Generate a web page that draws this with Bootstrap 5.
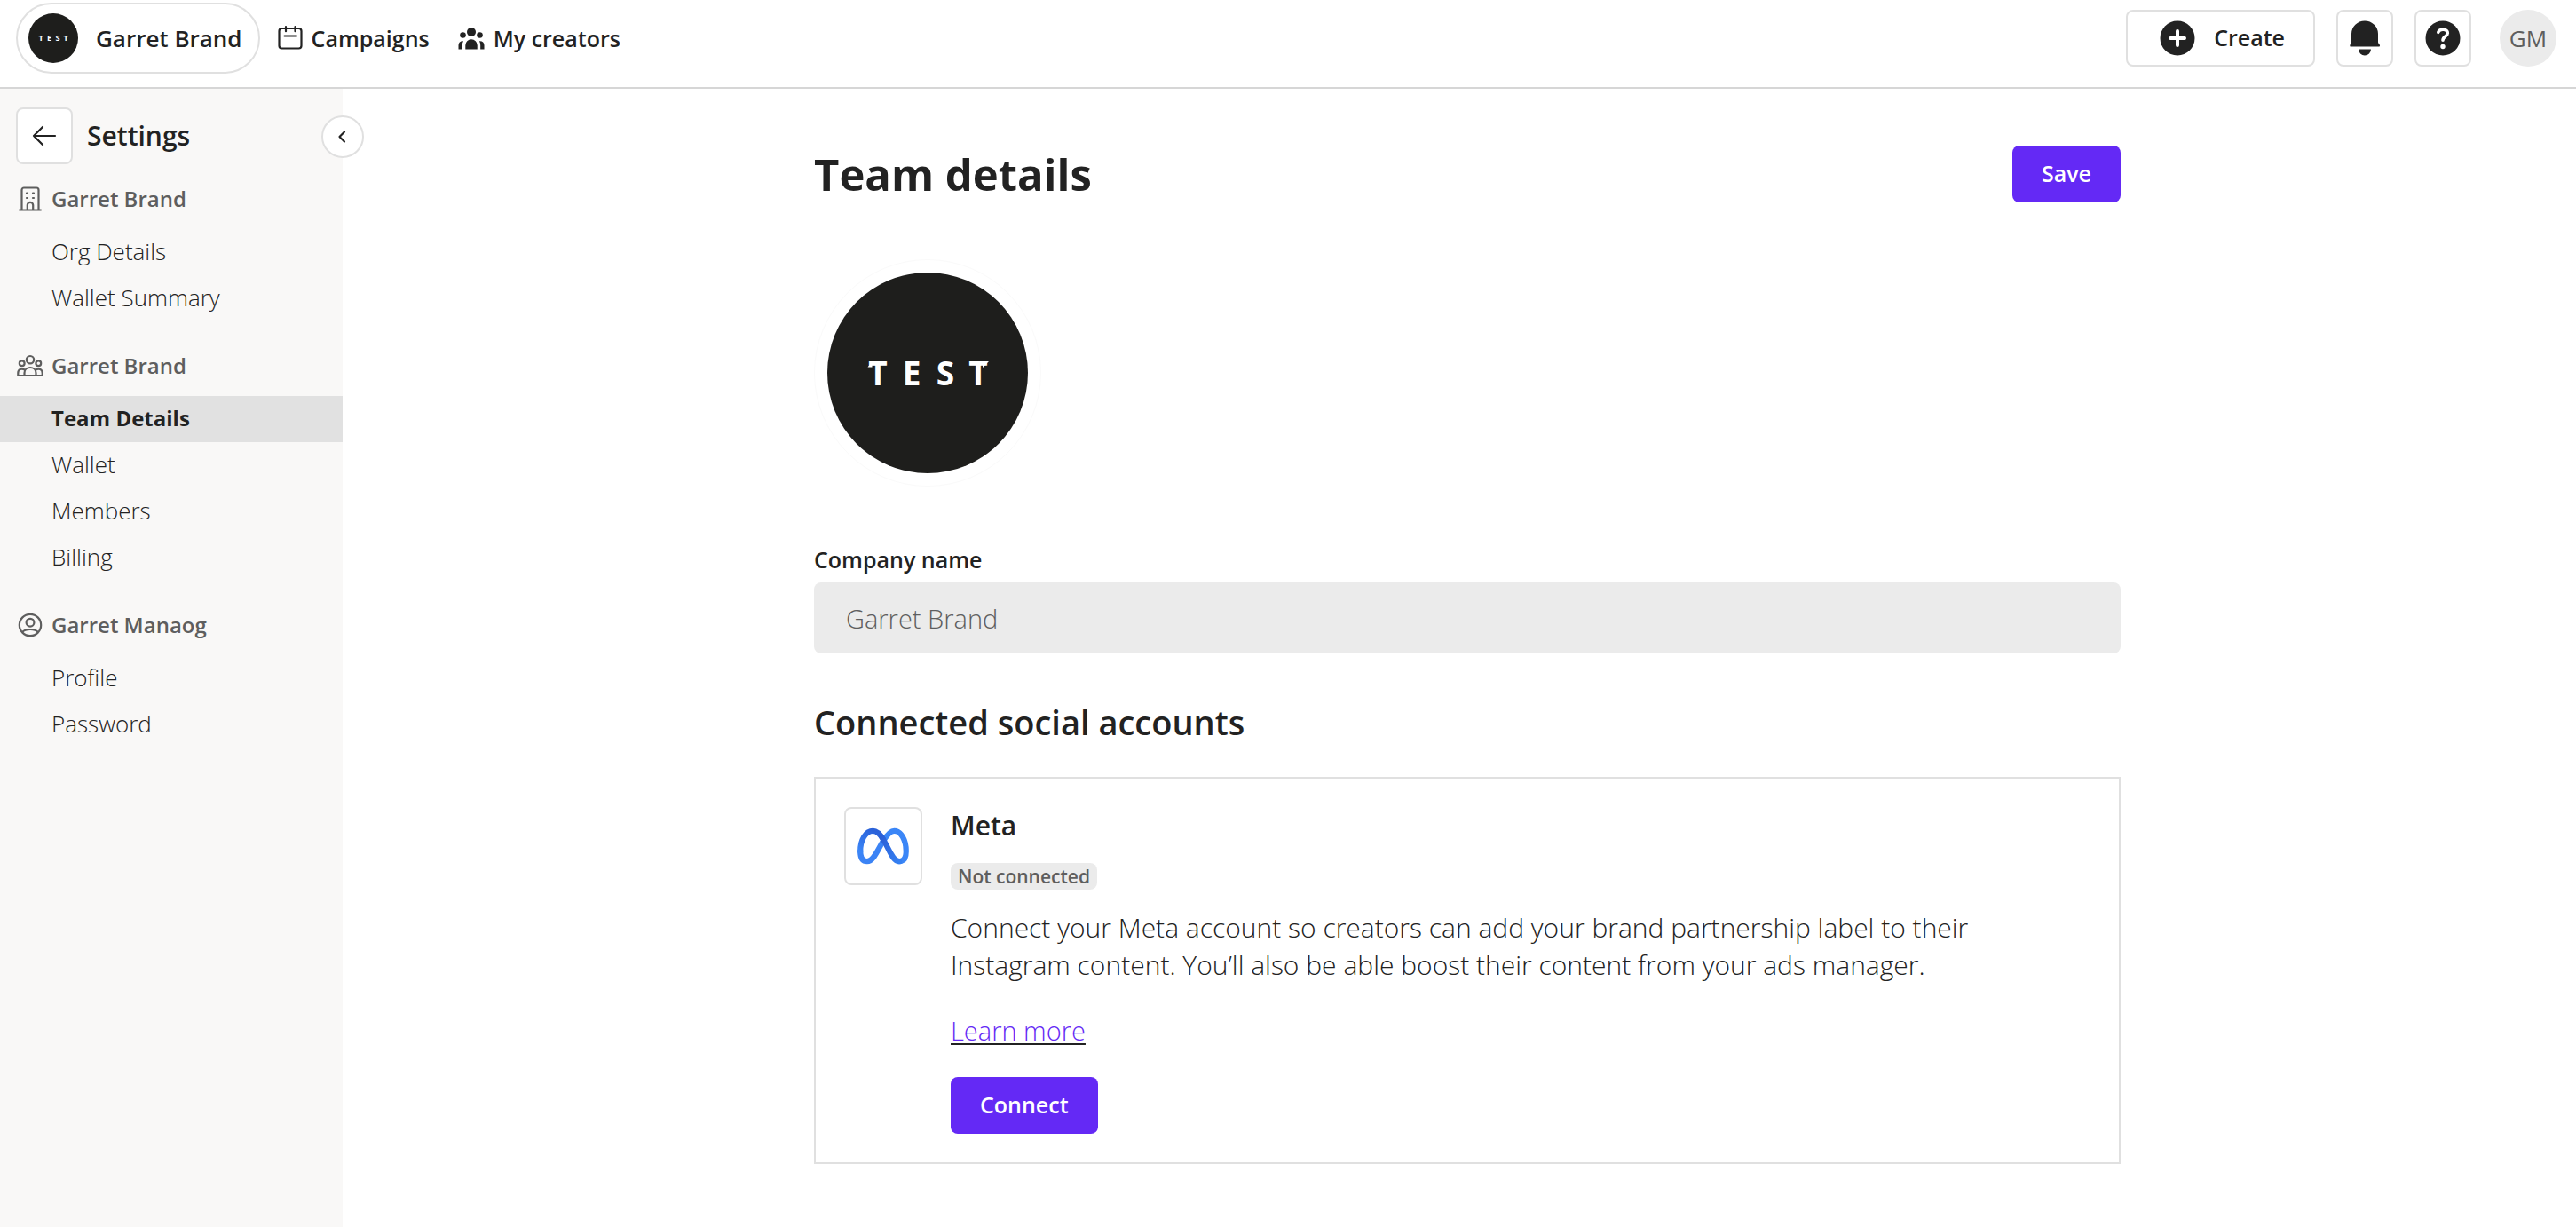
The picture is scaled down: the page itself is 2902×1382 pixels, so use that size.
<!DOCTYPE html>
<html lang="en">
<head>
<meta charset="utf-8">
<meta name="viewport" content="width=device-width, initial-scale=1">
<title>Team details</title>
<link href="https://cdn.jsdelivr.net/npm/bootstrap@5.3.0/dist/css/bootstrap.min.css" rel="stylesheet">
<style>
  :root { --ink: #222; --muted: #5e5e5e; --line: #e0e0e0; --accent: #6429f5; }
  body { font-family: "Open Sans", "Noto Sans", sans-serif; font-size: 26px; line-height: 36px; color: var(--ink); }
  svg { display: block; flex: none; }
  .logo-text { font-family: "Open Sans", sans-serif; font-size: 37px; font-weight: 700; fill: #fff; text-anchor: middle; }
  .top-bar { padding: 3px 22px 15px 18px; border-bottom: 2px solid #d6d6d6; }
  .brand-pill { height: 80px; padding: 0 18px 0 12px; gap: 20px; border: 2px solid var(--line); border-radius: 40px; color: var(--ink); font-size: 26px; }
  .top-nav { gap: 32px; margin-left: 20px; }
  .top-link { font-size: 25px; gap: 10px; color: var(--ink); }
  .tool-btn { height: 64px; min-width: 64px; padding: 0; border: 2px solid var(--line); border-radius: 8px; background: #fff; color: var(--ink); font-size: 25px; }
  .create-btn { padding: 0 32px 0 36px; gap: 21px; }
  .user-dot { width: 64px; height: 64px; margin-left: 8px; background: #ebebeb; color: var(--muted); font-size: 26px; }
  .side-bar { position: relative; width: 386px; padding-top: 21px; background: #f9f8f7; }
  .side-top { padding-left: 18px; gap: 16px; margin-bottom: 19px; }
  .side-top h2 { font-size: 30px; line-height: 40px; }
  .fold-btn { position: absolute; top: 30px; right: -24px; width: 48px; height: 48px; padding: 0; border: 2px solid var(--line); border-radius: 50%; background: #fff; color: var(--ink); }
  .side-group { margin-bottom: 30px; }
  .side-head { height: 40px; padding-left: 18px; gap: 8px; margin-bottom: 14px; font-size: 24px; color: var(--muted); }
  .side-link { height: 52px; padding: 0 0 2px 58px; color: var(--ink); font-size: 26px; font-weight: 300; }
  .side-link.active { background: #e1e1e1; color: var(--ink); font-weight: 700; font-size: 24px; }
  .page-area { padding: 64px 32px 32px 50px; }
  .page-col { max-width: 1472px; }
  h1 { font-size: 49px; line-height: 64px; }
  .main-btn { height: 64px; padding: 0 33px; border-radius: 8px; font-size: 25px; color: #fff; background: var(--accent); border: 0; }
  .main-btn:hover { background: #5420d6; color: #fff; }
  .team-logo { margin: 64px 0; }
  .field-label { font-size: 25px; line-height: 36px; margin-bottom: 8px; }
  .field-box { height: 80px; padding: 0 36px; border: 0; border-radius: 8px; font-size: 29px; font-weight: 300; }
  .field-box:disabled { background: #ebebeb; color: var(--muted); }
  .section-title { font-size: 38px; line-height: 52px; margin: 51px 0 36px; }
  .account-box { padding: 32px; gap: 32px; border: 2px solid var(--line); }
  .account-icon { width: 88px; height: 88px; border: 2px solid var(--line); border-radius: 8px; }
  .account-box h3 { font-size: 30px; line-height: 42px; margin: 0 0 21px; }
  .state-tag { padding: 0 8px; border-radius: 8px; font-size: 21px; line-height: 30px; background: #ebebeb; color: var(--muted); }
  .account-text { font-size: 30px; line-height: 42px; font-weight: 300; margin: 22px 0 32px; max-width: 1160px; }
  .learn-link { font-size: 29px; line-height: 42px; font-weight: 300; color: var(--accent); text-decoration: underline solid var(--ink) 2px; text-underline-offset: 3px; margin-bottom: 31px; }
</style>
<script src="https://cdn.jsdelivr.net/npm/bootstrap@5.3.0/dist/js/bootstrap.bundle.min.js"></script>
</head>
<body class="d-flex flex-column min-vh-100 bg-white">

<header class="top-bar d-flex align-items-center">
  <button type="button" class="btn brand-pill d-flex align-items-center fw-semibold">
    <svg width="56" height="56" viewBox="15 15 226 226" aria-hidden="true">
      <circle cx="128" cy="128" r="113" fill="#1e1e1c"/>
      <text class="logo-text" y="142" x="72 110 148 185">TEST</text>
    </svg>
    Garret Brand
  </button>
  <nav class="top-nav d-flex align-items-center">
    <a href="#" class="top-link d-flex align-items-center fw-semibold text-decoration-none">
      <svg width="28" height="28" viewBox="0 0 28 28" fill="none" stroke="currentColor" stroke-width="2.2" stroke-linecap="round"><rect x="1.5" y="3" width="25" height="22.500" rx="3"/><path d="M9 1.200v5M19.500 1.200v5M7.500 11.500h13.500"/></svg>
      Campaigns
    </a>
    <a href="#" class="top-link d-flex align-items-center fw-semibold text-decoration-none">
      <svg width="30" height="26" viewBox="0 0 30 26" fill="currentColor"><circle cx="15" cy="6" r="5"/><circle cx="5.500" cy="9.500" r="3.300"/><circle cx="24.500" cy="9.500" r="3.300"/><path d="M8.300 25.500v-4.500a6.700 6.700 0 0 1 13.400 0v4.500zM.500 25.500v-4.500c0-3 2-5 5.500-4.800-.8 1.400-1.200 3-1.200 4.800v4.500zM29.500 25.500v-4.500c0-3-2-5-5.500-4.800.8 1.400 1.200 3 1.200 4.800v4.500z"/></svg>
      My creators
    </a>
  </nav>
  <div class="d-flex align-items-center gap-4 ms-auto">
    <button type="button" class="btn tool-btn create-btn d-flex align-items-center fw-semibold">
      <svg width="40" height="40" viewBox="0 0 40 40"><circle cx="20" cy="20" r="19.500" fill="currentColor"/><path d="M20 12v16M12 20h16" stroke="#fff" stroke-width="4" stroke-linecap="round"/></svg>
      Create
    </button>
    <button type="button" class="btn tool-btn d-flex align-items-center justify-content-center" aria-label="Notifications">
      <svg width="40" height="40" viewBox="0 0 40 40" fill="currentColor"><path d="M5 15a15 14.500 0 0 1 30 0v9.500c0 1.500 2 2.200 2 4 0 .6-.5 1-1 1H4.300c-.8 0-1-.4-1-1 0-1.800 1.700-2.500 1.700-4zM13 32.500h14a7 7 0 0 1-14 0z"/></svg>
    </button>
    <button type="button" class="btn tool-btn d-flex align-items-center justify-content-center" aria-label="Help">
      <svg width="40" height="40" viewBox="0 0 40 40"><circle cx="20" cy="20" r="19.500" fill="currentColor"/><path d="M14.800 13.300c1.400-4.300 10.500-4.300 10.500 1 0 3.900-5.300 3.500-5.300 8" fill="none" stroke="#fff" stroke-width="3.600" stroke-linecap="round"/><circle cx="20" cy="29.500" r="2.700" fill="#fff"/></svg>
    </button>
    <div class="user-dot rounded-circle d-flex align-items-center justify-content-center">GM</div>
  </div>
</header>

<div class="d-flex flex-grow-1">
  <aside class="side-bar flex-shrink-0">
    <div class="side-top d-flex align-items-center">
      <button type="button" class="btn tool-btn d-flex align-items-center justify-content-center" aria-label="Back">
        <svg width="28" height="24" viewBox="0 0 28 24" fill="none" stroke="currentColor" stroke-width="2.200" stroke-linecap="round" stroke-linejoin="round"><path d="M26 12H2M12 2L2 12l10 10"/></svg>
      </button>
      <h2 class="fw-semibold m-0">Settings</h2>
    </div>
    <button type="button" class="btn fold-btn d-flex align-items-center justify-content-center" aria-label="Collapse sidebar">
      <svg width="14" height="16" viewBox="0 0 14 16" fill="none" stroke="currentColor" stroke-width="2.200" stroke-linecap="round" stroke-linejoin="round"><path d="M9 2.500L3.500 8 9 13.500"/></svg>
    </button>

    <section class="side-group">
      <div class="side-head d-flex align-items-center fw-semibold">
        <svg width="32" height="28" viewBox="0 0 32 28" fill="none" stroke="currentColor" stroke-width="2.200" stroke-linecap="round"><path d="M4 26.500h24M6.500 26V4a2.500 2.500 0 0 1 2.500-2.500h14a2.500 2.500 0 0 1 2.500 2.500v22M12.800 26v-5a3.200 3.200 0 0 1 6.400 0v5M12 7.500h1M19 7.500h1M12 13h1M19 13h1"/></svg>
        Garret Brand
      </div>
      <nav class="nav flex-column">
        <a href="#" class="nav-link side-link d-flex align-items-center">Org Details</a>
        <a href="#" class="nav-link side-link d-flex align-items-center">Wallet Summary</a>
      </nav>
    </section>
    <section class="side-group">
      <div class="side-head d-flex align-items-center fw-semibold">
        <svg width="32" height="26" viewBox="0 0 32 26" fill="none" stroke="currentColor" stroke-width="2.200" stroke-linejoin="round"><circle cx="16" cy="6.200" r="4.200"/><circle cx="6.700" cy="10.200" r="2.900"/><circle cx="25.300" cy="10.200" r="2.900"/><path d="M9.500 24v-3c0-8 13-8 13 0v3zM9.500 24H2.300v-3c0-4 4-5.300 7.500-3.500M22.500 24h7.200v-3c0-4-4-5.300-7.500-3.500"/></svg>
        Garret Brand
      </div>
      <nav class="nav flex-column">
        <a href="#" class="nav-link side-link active d-flex align-items-center" aria-current="page">Team Details</a>
        <a href="#" class="nav-link side-link d-flex align-items-center">Wallet</a>
        <a href="#" class="nav-link side-link d-flex align-items-center">Members</a>
        <a href="#" class="nav-link side-link d-flex align-items-center">Billing</a>
      </nav>
    </section>
    <section class="side-group">
      <div class="side-head d-flex align-items-center fw-semibold">
        <svg width="32" height="28" viewBox="0 0 32 28" fill="none" stroke="currentColor" stroke-width="2.200"><circle cx="16" cy="14" r="12.200"/><circle cx="16" cy="11.200" r="4.400"/><path d="M7 22c3.500-4 14.500-4 18 0"/></svg>
        Garret Manaog
      </div>
      <nav class="nav flex-column">
        <a href="#" class="nav-link side-link d-flex align-items-center">Profile</a>
        <a href="#" class="nav-link side-link d-flex align-items-center">Password</a>
      </nav>
    </section>
  </aside>

  <main class="page-area flex-grow-1">
    <div class="page-col mx-auto">
      <div class="d-flex align-items-center justify-content-between">
        <h1 class="fw-bold m-0">Team details</h1>
        <button type="button" class="btn main-btn fw-semibold">Save</button>
      </div>

      <svg class="team-logo" width="256" height="256" viewBox="0 0 256 256" role="img" aria-label="Team logo">
        <circle cx="128" cy="128" r="127.500" fill="#fff" stroke="#fafafa"/>
        <circle cx="128" cy="128" r="113" fill="#1e1e1c"/>
        <text class="logo-text" y="142" x="72 110 148 185">TEST</text>
        <path d="M65.500 115v6.500h-5zM190 115h7l-7 7z" fill="#fff"/>
      </svg>

      <label for="company" class="field-label d-block fw-semibold">Company name</label>
      <input id="company" type="text" class="form-control field-box" value="Garret Brand" disabled>

      <h2 class="section-title fw-semibold">Connected social accounts</h2>
      <section class="account-box d-flex align-items-start">
        <div class="account-icon d-flex align-items-center justify-content-center flex-shrink-0">
          <svg width="60" height="42" viewBox="0 0 62 44" fill="none" stroke-width="6.500" stroke-linecap="round" role="img" aria-label="Meta">
            <defs>
              <linearGradient id="meta-a" x1="0" y1="1" x2=".6" y2="0"><stop offset="0" stop-color="#3b86f7"/><stop offset="1" stop-color="#2b62d9"/></linearGradient>
              <linearGradient id="meta-b" x1="0" y1="0" x2="1" y2="1"><stop offset="0" stop-color="#2b5fd6"/><stop offset="1" stop-color="#3580f2"/></linearGradient>
            </defs>
            <path d="M31 16C25 25 20 40 12 40 6 40 4 35 4 28" stroke="#3b83f5"/>
            <path d="M31 16C36 8 40 4 44 4c8 0 14 11 14 24 0 8-3 12-8 12" stroke="#3b86f7"/>
            <path d="M4 28C4 15 10 4 19 4c5 0 9 5 12 10" stroke="url(#meta-a)"/>
            <path d="M29 11c8 11 12 29 21 29" stroke="url(#meta-b)"/>
          </svg>
        </div>
        <div class="d-flex flex-column align-items-start">
          <h3 class="fw-semibold">Meta</h3>
          <span class="state-tag fw-semibold">Not connected</span>
          <p class="account-text">Connect your Meta account so creators can add your brand partnership label to their Instagram content. You’ll also be able boost their content from your ads manager.</p>
          <a href="#" class="learn-link">Learn more</a>
          <button type="button" class="btn main-btn fw-semibold">Connect</button>
        </div>
      </section>
    </div>
  </main>
</div>
</body>
</html>
